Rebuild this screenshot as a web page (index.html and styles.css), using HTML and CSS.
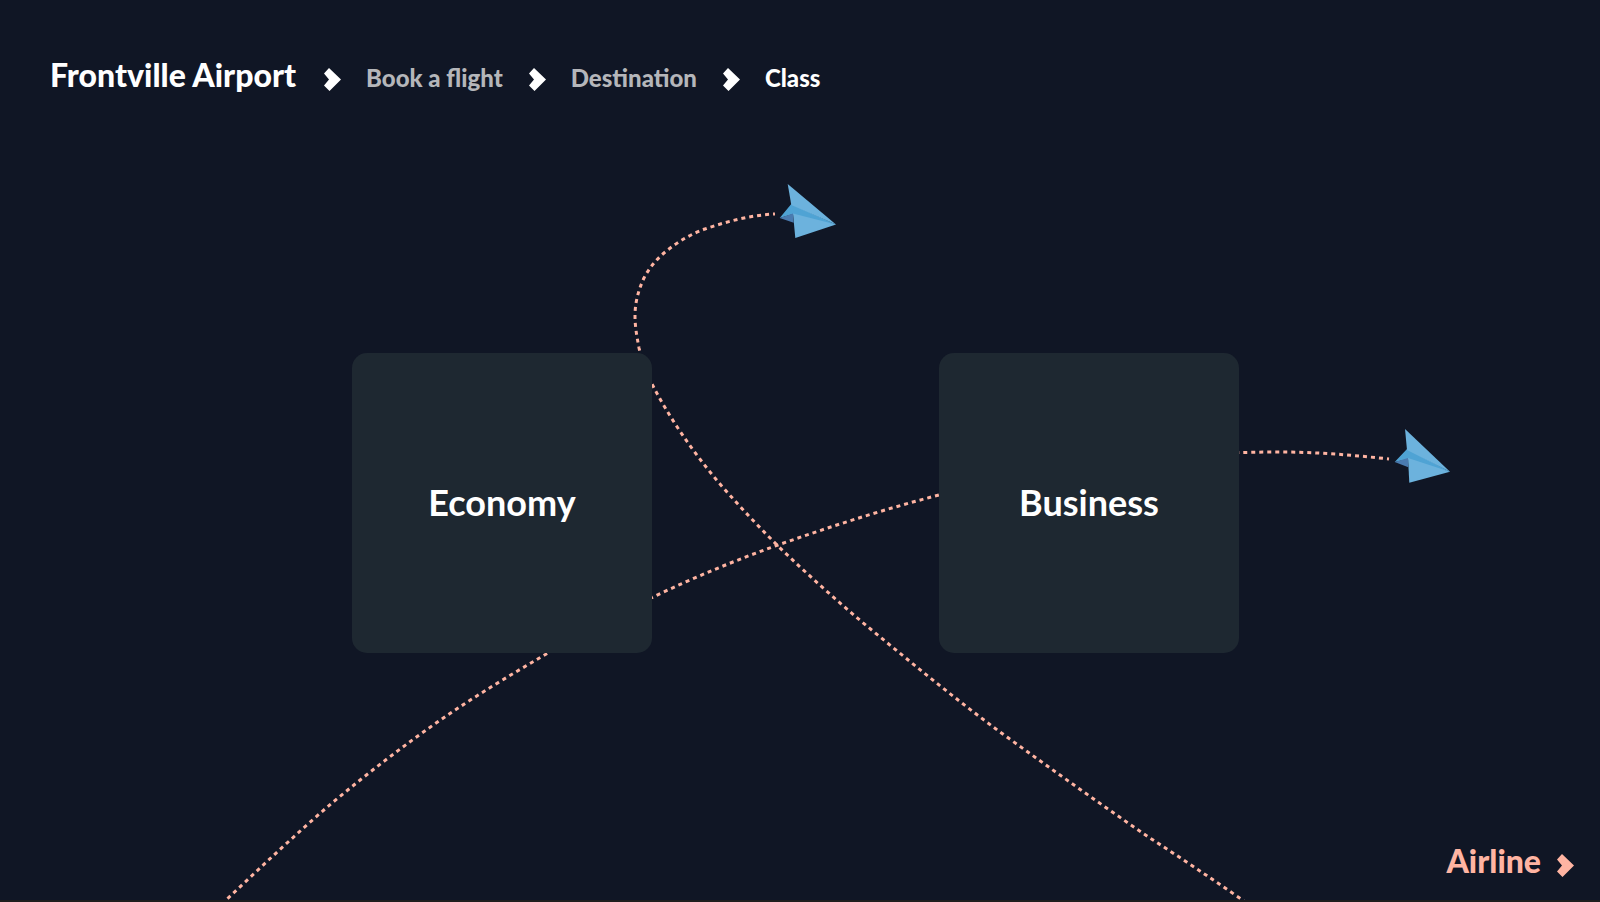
FILE: index.html
```html
<!DOCTYPE html>
<html lang="en">
<head>
<meta charset="utf-8">
<title>Frontville Airport</title>
<link rel="stylesheet" href="styles.css">
</head>
<body>
<div class="page">
  <svg class="scene" viewBox="0 0 1600 900" preserveAspectRatio="xMidYMax slice" aria-hidden="true">
    <g class="trail">
      <path d="M775 214C752 215 728 221 705 229C691 234 677 242 664 253C656 260 649 268 644 278C638 291 635 303 635 316C635 327 637 337 639 348C642 360 646 372 652 384C669 417 692 451 720 484C740 507 759 527 779 547C807 574 834 598 862 622C908 660 954 698 1000 732C1050 768 1100 804 1150 838C1181 858 1212 879 1244 901"/>
      <path d="M1389 459C1352 455 1316 452 1280 452C1166 452 1053 466 939 495C885 509 832 526 778 545C736 560 695 577 653 597C618 614 583 632 548 653C512 674 475 696 439 721C403 746 368 773 332 803C297 833 261 867 225 901"/>
    </g>
    <g>
      <path class="fold" d="M779.7 218L791.3 204L800 208L836 224.5L800 220L793 214Z"/>
      <path class="wing" d="M787.7 184L836 224.5L791.3 205Z"/>
      <path class="wing" d="M793 213.5L836 224.5L795.3 238Z"/>
      <path class="shade" d="M779.7 218L793 213.5L793.7 222.7Z"/>
    </g>
    <g>
      <path class="fold" d="M1394.7 462L1407 449L1415 453L1450 471.7L1415 464L1408 459Z"/>
      <path class="wing" d="M1405 429L1450 471.7L1407 450Z"/>
      <path class="wing" d="M1408 458L1450 471.7L1409.3 482.7Z"/>
      <path class="shade" d="M1394.7 462L1408 458L1408.3 467.3Z"/>
    </g>
  </svg>

  <header class="header">
    <h1 class="brand">Frontville Airport</h1>
    <nav class="crumbs" aria-label="Breadcrumb">
      <svg class="chevron" viewBox="0 0 18 24" aria-hidden="true"><path d="M6 1L18 12.5L6.5 24L1 18.5L6 12.5L1 6.5Z"/></svg>
      <a class="crumb" href="#">Book a flight</a>
      <svg class="chevron" viewBox="0 0 18 24" aria-hidden="true"><path d="M6 1L18 12.5L6.5 24L1 18.5L6 12.5L1 6.5Z"/></svg>
      <a class="crumb" href="#">Destination</a>
      <svg class="chevron" viewBox="0 0 18 24" aria-hidden="true"><path d="M6 1L18 12.5L6.5 24L1 18.5L6 12.5L1 6.5Z"/></svg>
      <a class="crumb current" href="#" aria-current="page">Class</a>
    </nav>
  </header>

  <main class="choices">
    <button class="card" type="button">Economy</button>
    <button class="card" type="button">Business</button>
  </main>

  <footer class="footer">
    <a class="next" href="#">Airline
      <svg class="chevron" viewBox="0 0 18 24" aria-hidden="true"><path d="M6 1L18 12.5L6.5 24L1 18.5L6 12.5L1 6.5Z"/></svg>
    </a>
  </footer>
</div>
</body>
</html>
```
FILE: styles.css
```css
* { box-sizing: border-box; }

body {
  margin: 0;
  background: #1e1e1e;
  color: #fff;
  font-family: Lato, sans-serif;
  font-weight: 900;
}

.page {
  position: relative;
  display: flex;
  flex-direction: column;
  min-height: calc(100vh - 2px);
  background: #101625;
  overflow: hidden;
}

.scene {
  position: absolute;
  inset: 0;
  width: 100%;
  height: 100%;
}

.trail {
  fill: none;
  stroke: #ffb4a2;
  stroke-width: 3;
  stroke-dasharray: 4 4;
  stroke-dashoffset: 2;
}

.wing { fill: #6cb2dd; }
.fold { fill: #4fa3d4; }
.shade { fill: #4a7bb0; }

.header {
  position: relative;
  display: flex;
  align-items: flex-end;
  gap: 27px;
  padding: 55px 50px 0;
}

.brand {
  margin: 0;
  font-size: 32px;
  line-height: 40px;
  font-weight: 900;
}

.crumbs {
  display: flex;
  align-items: center;
  gap: 25px;
  font-size: 24px;
  line-height: 34px;
}

.crumb {
  color: #b5b6ba;
  text-decoration: none;
}

.current { color: #fff; }

.chevron {
  flex: none;
  width: 18px;
  height: 24px;
  margin-top: 2px;
  fill: currentColor;
}

.choices {
  position: relative;
  flex: 1;
  display: flex;
  align-items: center;
  justify-content: center;
  gap: 287px;
  padding: 70px 9px 0 0;
}

.card {
  width: 300px;
  height: 300px;
  padding: 0 0 2px;
  border: 0;
  border-radius: 15px;
  background: #1e2831;
  color: #fff;
  font: bold 36px Lato, sans-serif;
}

.footer {
  position: relative;
  display: flex;
  justify-content: flex-end;
  padding: 0 26px 19px;
}

.next {
  display: flex;
  align-items: center;
  gap: 15px;
  color: #ffb4a2;
  font-size: 32px;
  line-height: 40px;
  text-decoration: none;
}

.next .chevron { margin-top: 8px; }
```
